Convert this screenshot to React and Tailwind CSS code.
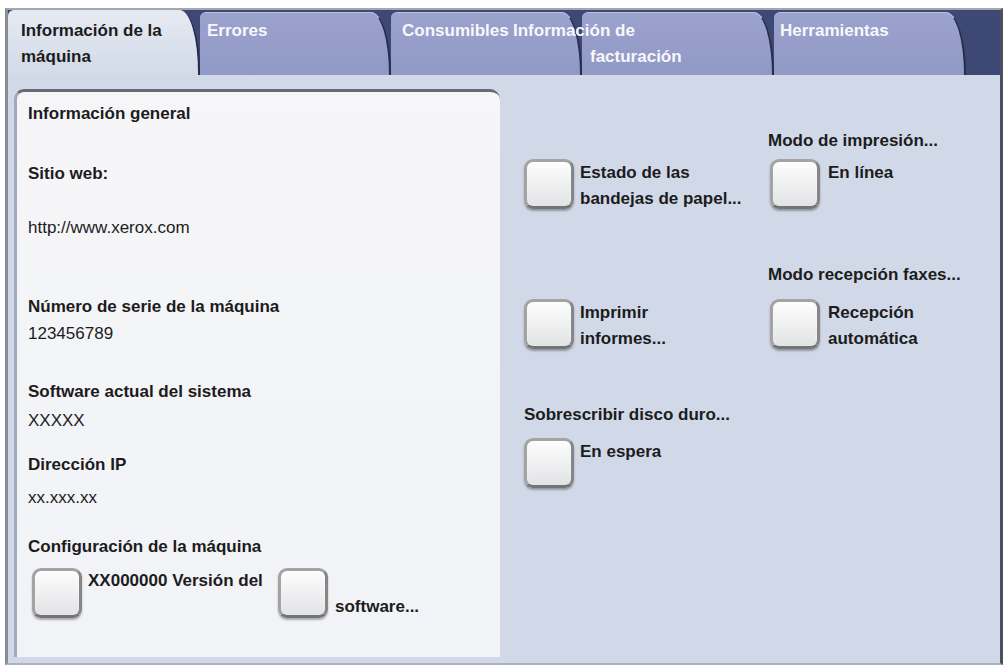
// Pantalla "Información de la máquina" (panel táctil Xerox)

function Key({ className = '' }) {
  return (
    <div
      className={`h-[50px] w-[50px] shrink-0 rounded-[9px] border-[3px] border-[#a3a3a3] border-b-[#747474] border-r-[#868686] bg-linear-to-b from-[#fdfdfd] to-[#e2e3e5] shadow-[0_2px_2px_rgba(0,0,0,0.3),inset_0_1px_2px_rgba(255,255,255,0.9)] ${className}`}
    />
  );
}

function Option({ lines, gap = 'ml-[6px]', className = '' }) {
  return (
    <div className={`flex items-start ${className}`}>
      <Key />
      <div className={`${gap} mt-px font-bold leading-[26px]`}>
        {lines.map((l) => (
          <div key={l}>{l}</div>
        ))}
      </div>
    </div>
  );
}

const tabBase =
  'h-full shrink-0 rounded-tl-[6px] rounded-tr-[20px_62px] border-r-2 border-r-[#252d4c] font-bold leading-[26px]';
const tabIdle = `${tabBase} mt-[2px] h-[63px] border-t border-t-[#bcc2e0] bg-linear-to-b from-[#9ba2cc] to-[#9098c5] pt-[5px] text-[#f7f8fc]`;

export default function App() {
  return (
    <div className="h-[670px] w-[1006px] bg-white pb-[5px] pl-[5px] pr-[3px] pt-[8px] font-['Liberation_Sans',Arial,sans-serif] text-[17px] text-[#1c1c1c]">
      <div className="flex h-full flex-col border-b-2 border-l-[3px] border-r-[3px] border-t-2 border-b-[#aeb2bb] border-l-[#888c96] border-r-[#4b4f5e] border-t-[#a4a7af]">
        {/* pestañas */}
        <div className="flex h-[65px] shrink-0 items-start bg-[#3e4874]">
          <div className={`${tabBase} w-[192px] bg-linear-to-b from-[#e6eaf2] to-[#d2dae8] pl-[13px] pt-[8px]`}>
            <div>Información de la</div>
            <div>máquina</div>
          </div>
          <div className={`${tabIdle} w-[191px] pl-[7px]`}>Errores</div>
          <div className={`${tabIdle} w-[191px] pl-[11px]`}>Consumibles</div>
          <div className={`${tabIdle} w-[192px]`}>
            <div className="-ml-[69px] whitespace-nowrap">Información de</div>
            <div className="ml-[8px]">facturación</div>
          </div>
          <div className={`${tabIdle} w-[192px] pl-[6px]`}>Herramientas</div>
        </div>

        {/* contenido */}
        <div className="flex flex-1 bg-[#d1d9e8]">
          <div className="mb-[6px] ml-[6px] mt-[14px] flex w-[486px] flex-col rounded-t-[10px] border-l-[3px] border-t-[3px] border-l-[#a1aabd] border-t-[#686b73] bg-linear-to-b from-[#f6f6f8] to-[#f1f3f6] pl-[11px] pt-[12px] leading-[20px]">
            <div className="font-bold">Información general</div>
            <div className="mt-[40px] font-bold">Sitio web:</div>
            <div className="mt-[34px]">http://www.xerox.com</div>
            <div className="mt-[59px] font-bold">Número de serie de la máquina</div>
            <div className="mt-[7px]">123456789</div>
            <div className="mt-[38px] font-bold">Software actual del sistema</div>
            <div className="mt-[9px]">XXXXX</div>
            <div className="mt-[24px] font-bold">Dirección IP</div>
            <div className="mt-[13px]">xx.xxx.xx</div>
            <div className="mt-[29px] font-bold">Configuración de la máquina</div>
            <div className="ml-[4px] mt-[11px] flex items-start">
              <Key />
              <div className="ml-[6px] mt-[3px] w-[190px] font-bold">XX000000 Versión del</div>
              <Key />
              <div className="ml-[7px] mt-[29px] font-bold">software...</div>
            </div>
          </div>

          <div className="ml-[24px] flex flex-col leading-[20px]">
            <div className="mt-[56px] grid grid-cols-[244px_1fr]">
              <div />
              <div className="font-bold">Modo de impresión...</div>
            </div>
            <div className="mt-[8px] grid grid-cols-[244px_1fr]">
              <Option lines={['Estado de las', 'bandejas de papel...']} />
              <Option lines={['En línea']} gap="ml-[8px]" className="ml-[2px]" />
            </div>

            <div className="mt-[53px] grid grid-cols-[244px_1fr]">
              <div />
              <div className="font-bold">Modo recepción faxes...</div>
            </div>
            <div className="mt-[14px] grid grid-cols-[244px_1fr]">
              <Option lines={['Imprimir', 'informes...']} />
              <Option lines={['Recepción', 'automática']} gap="ml-[8px]" className="ml-[2px]" />
            </div>

            <div className="mt-[53px] font-bold">Sobrescribir disco duro...</div>
            <div className="mt-[13px]">
              <Option lines={['En espera']} />
            </div>
          </div>
        </div>
      </div>
    </div>
  );
}
